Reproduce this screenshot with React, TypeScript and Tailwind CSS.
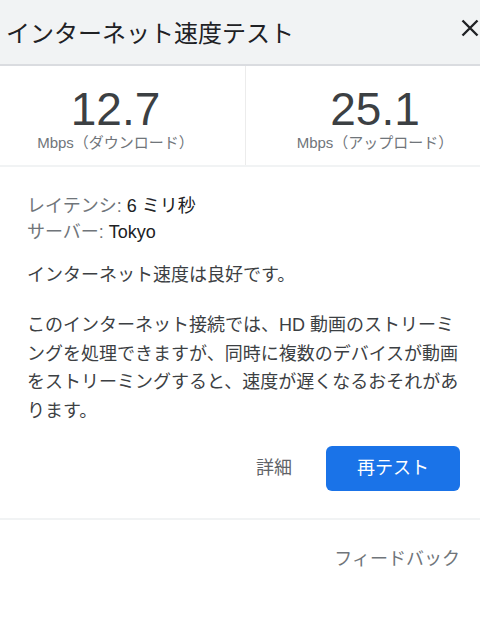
const font = "font-['Liberation_Sans','Noto_Sans_CJK_JP',sans-serif]";

const Stat = ({ value, label, className }: { value: string; label: string; className: string }) => (
  <div className={`flex flex-col items-center pt-[20px] ${className}`}>
    <div className="text-[46px] leading-[46px] text-[#3c4043]">{value}</div>
    <div className="text-[15px] leading-[22px] text-[#70757a]">{label}</div>
  </div>
);

const App = () => {
  return (
    <div className={`w-[480px] h-[623px] bg-white overflow-hidden ${font}`}>
      <div className="h-[66px] bg-[#f1f3f4] border-b-2 border-[#dadce0] flex items-start justify-between">
        <div className="pl-[6px] pt-[17px] text-[24px] leading-[34px] text-[#202124]">インターネット速度テスト</div>
        <svg className="mt-[19px] mr-[1px]" width="18" height="18" viewBox="0 0 18 18">
          <path d="M1.5 1.5 L16.5 16.5 M16.5 1.5 L1.5 16.5" stroke="#202124" strokeWidth="2.4" fill="none" />
        </svg>
      </div>
      <div className="flex h-[101px] border-b-2 border-[#f1f3f4]">
        <Stat value="12.7" label="Mbps（ダウンロード）" className="w-[246px] pr-[14px] border-r border-[#ececec]" />
        <Stat value="25.1" label="Mbps（アップロード）" className="flex-1 pl-[24px]" />
      </div>
      <div className="pl-[27px] pr-[20px] pt-[26px]">
        <div className="text-[18px] leading-[26px]">
          <div><span className="text-[#70757a]">レイテンシ:</span> <span className="text-[#202124]">6 ミリ秒</span></div>
          <div><span className="text-[#70757a]">サーバー:</span> <span className="text-[#202124]">Tokyo</span></div>
        </div>
        <p className="mt-[16px] text-[18px] leading-[28px] text-[#3c4043]">インターネット速度は良好です。</p>
        <p className="mt-[22px] text-[18px] leading-[28.5px] text-[#3c4043]">
          このインターネット接続では、HD 動画のストリーミングを処理できますが、同時に複数のデバイスが動画をストリーミングすると、速度が遅くなるおそれがあります。
        </p>
        <div className="flex justify-end items-center gap-[34px] mt-[21px]">
          <button className="text-[18px] text-[#5f6368]">詳細</button>
          <button className="w-[134px] h-[45px] rounded-[6px] bg-[#1a73e8] text-white text-[18px]">再テスト</button>
        </div>
      </div>
      <div className="mt-[27px] border-t-2 border-[#f1f3f4]"></div>
      <div className="flex justify-end pr-[20px] pt-[26px]">
        <button className="text-[18px] leading-[26px] text-[#70757a]">フィードバック</button>
      </div>
    </div>
  );
};

export default App;
